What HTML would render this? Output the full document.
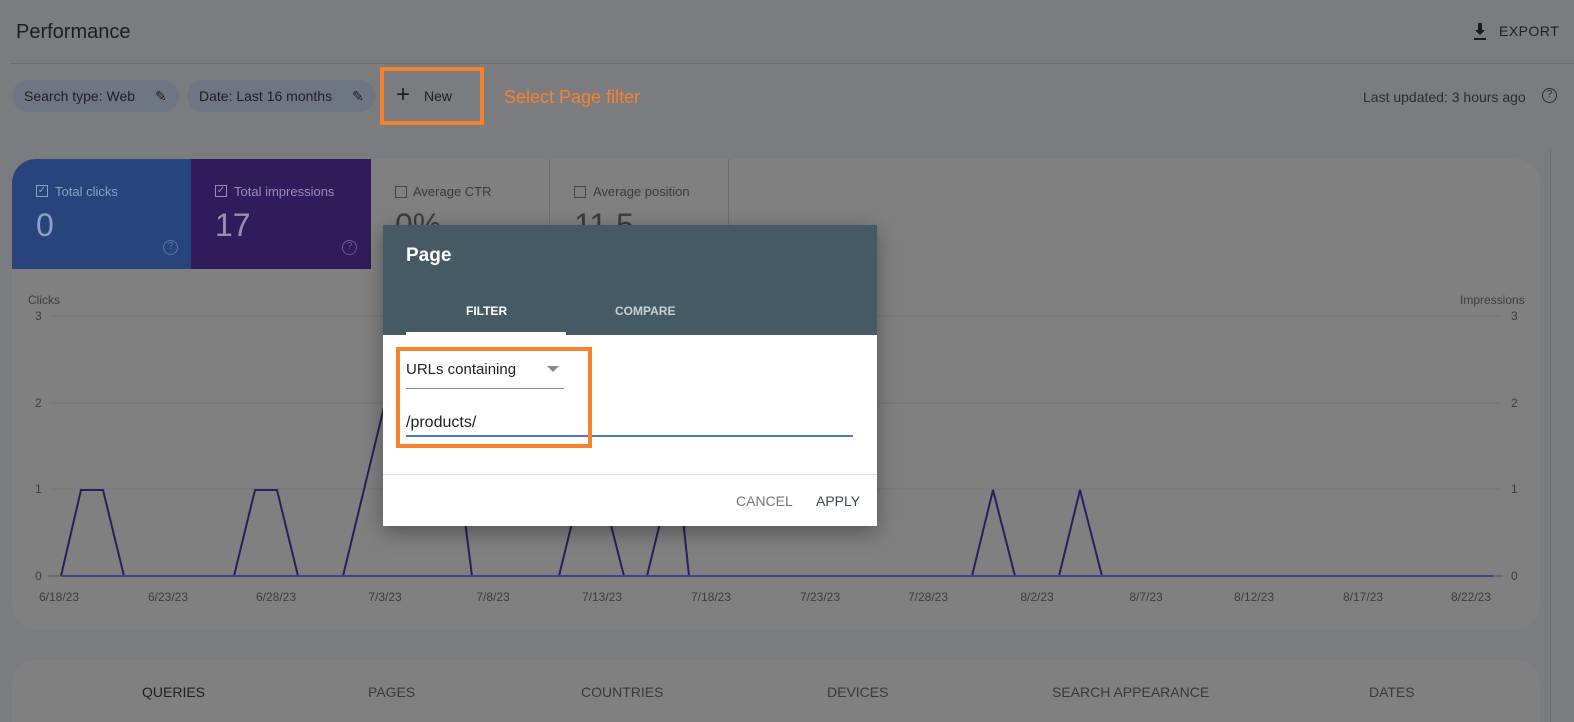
<!DOCTYPE html>
<html style="overflow:hidden;height:722px"><head><meta charset="utf-8"><style>
*{margin:0;padding:0;box-sizing:border-box}
body{width:1574px;height:722px;overflow:hidden;background:#7b7c80;font-family:"Liberation Sans",Arial,sans-serif;position:relative;color:#222}
.a{position:absolute;white-space:nowrap}
.chip{position:absolute;top:80px;height:32px;border-radius:16px;background:#6f7683;font-size:14px;color:#1e1e1e;line-height:32px;padding-left:12px}
.card{position:absolute;background:#808080;border-radius:24px}
.lbl{font-size:13px;color:#3a3a3a}
.ax{font-size:12px;color:#3c3c3c}
.tab{position:absolute;top:684px;font-size:14px;color:#383838}
</style></head><body>
<div class="a" style="left:16px;top:21px;font-size:20px;color:#1e1e1e">Performance</div>
<svg class="a" style="left:1470px;top:21px" width="20" height="20" viewBox="0 0 20 20"><path d="M8 2h4v7h3l-5 5-5-5h3z M4 17h12v2H4z" fill="#1a1a1a"/></svg>
<div class="a" style="left:1499px;top:23px;font-size:14px;color:#1e1e1e;letter-spacing:.5px">EXPORT</div>
<div class="a" style="left:10px;top:63px;width:1564px;height:1px;background:#6c6d70"></div>
<div class="chip" style="left:12px;width:167px">Search type: Web<span style="position:absolute;left:143px;top:0">✎</span></div>
<div class="chip" style="left:187px;width:189px">Date: Last 16 months<span style="position:absolute;left:165px;top:0">✎</span></div>
<div class="a" style="left:380px;top:67px;width:104px;height:58px;border:4px solid #f7822d"></div>
<div class="a" style="left:396px;top:83px;font-size:24px;color:#1e1e1e;line-height:24px">+</div>
<div class="a" style="left:424px;top:88px;font-size:14px;color:#1e1e1e">New</div>
<div class="a" style="left:504px;top:87px;font-size:18px;color:#f7822d">Select Page filter</div>
<div class="a" style="left:1363px;top:89px;font-size:14px;color:#2c2c2c">Last updated: 3 hours ago</div>
<div class="a" style="left:1542px;top:88px;width:15px;height:15px;border:1.5px solid #2c2c2c;border-radius:50%;font-size:10px;text-align:center;line-height:12px;color:#2c2c2c">?</div>
<div class="a" style="left:1550px;top:150px;width:1px;height:572px;background:#6e6f72"></div>

<div class="card" style="left:12px;top:159px;width:1528px;height:470px"></div>
<div class="a" style="left:12px;top:159px;width:179px;height:110px;background:#27447c;border-top-left-radius:24px"></div>
<div class="a" style="left:191px;top:159px;width:180px;height:110px;background:#301c5c"></div>
<div class="a" style="left:549px;top:159px;width:1px;height:110px;background:#6e6e6e"></div>
<div class="a" style="left:728px;top:159px;width:1px;height:110px;background:#6e6e6e"></div>
<div class="a" style="left:36px;top:185px;width:12px;height:12px;border:1px solid #8fa0c0;font-size:10px;line-height:10px;color:#8fa0c0;text-align:center">✓</div>
<div class="a" style="left:55px;top:184px;font-size:13px;color:#8fa0c0">Total clicks</div>
<div class="a" style="left:36px;top:207px;font-size:32px;color:#8fa0c0">0</div>
<div class="a" style="left:163px;top:240px;width:15px;height:15px;border:1.5px solid #5e73a0;border-radius:50%;font-size:10px;line-height:12px;text-align:center;color:#5e73a0">?</div>
<div class="a" style="left:215px;top:185px;width:12px;height:12px;border:1px solid #9a8fb3;font-size:10px;line-height:10px;color:#9a8fb3;text-align:center">✓</div>
<div class="a" style="left:234px;top:184px;font-size:13px;color:#9a8fb3">Total impressions</div>
<div class="a" style="left:215px;top:207px;font-size:32px;color:#9a8fb3">17</div>
<div class="a" style="left:342px;top:240px;width:15px;height:15px;border:1.5px solid #6a5b8d;border-radius:50%;font-size:10px;line-height:12px;text-align:center;color:#6a5b8d">?</div>
<div class="a" style="left:395px;top:186px;width:12px;height:12px;border:1px solid #444"></div>
<div class="a lbl" style="left:413px;top:184px">Average CTR</div>
<div class="a" style="left:395px;top:207px;font-size:32px;color:#3c3c3c">0%</div>
<div class="a" style="left:574px;top:186px;width:12px;height:12px;border:1px solid #444"></div>
<div class="a lbl" style="left:593px;top:184px">Average position</div>
<div class="a" style="left:574px;top:207px;font-size:32px;color:#3c3c3c">11.5</div>

<div class="a ax" style="left:28px;top:293px">Clicks</div>
<div class="a ax" style="left:1460px;top:293px">Impressions</div>
<svg class="a" style="left:0;top:300px" width="1574" height="320">
<g stroke="#747474" stroke-width="1"><line x1="50" y1="16" x2="1500" y2="16"/><line x1="50" y1="103" x2="1500" y2="103"/><line x1="50" y1="189" x2="1500" y2="189"/></g>
<g fill="#3c3c3c" font-size="12" font-family="Liberation Sans"><text x="35" y="20">3</text><text x="35" y="107">2</text><text x="35" y="193">1</text><text x="35" y="280">0</text>
<text x="1511" y="20">3</text><text x="1511" y="107">2</text><text x="1511" y="193">1</text><text x="1511" y="280">0</text>
<g text-anchor="middle"><text x="59" y="301">6/18/23</text><text x="168" y="301">6/23/23</text><text x="276" y="301">6/28/23</text><text x="385" y="301">7/3/23</text><text x="493" y="301">7/8/23</text><text x="602" y="301">7/13/23</text><text x="711" y="301">7/18/23</text><text x="820" y="301">7/23/23</text><text x="928" y="301">7/28/23</text><text x="1037" y="301">8/2/23</text><text x="1146" y="301">8/7/23</text><text x="1254" y="301">8/12/23</text><text x="1363" y="301">8/17/23</text><text x="1471" y="301">8/22/23</text></g></g>
<line x1="48" y1="276" x2="1503" y2="276" stroke="#555" stroke-width="1"/>
<polyline fill="none" stroke="#2c1d5e" stroke-width="2" points="61,276 81,190 103,190 124,276 234,276 255,190 277,190 298,276 343,276 385,103 450,103 472,276 559,276 580,190 602,190 624,276 647,276 668,190 680,190 689,276 972,276 993,190 1015,276 1059,276 1080,190 1102,276 1493,276"/>
<line x1="61" y1="276" x2="1493" y2="276" stroke="#2b4a86" stroke-width="2"/>
</svg>

<div class="card" style="left:12px;top:660px;width:1528px;height:62px;border-bottom-left-radius:0;border-bottom-right-radius:0"></div>
<div class="tab" style="left:142px;color:#1e1e1e">QUERIES</div>
<div class="tab" style="left:368px">PAGES</div>
<div class="tab" style="left:581px">COUNTRIES</div>
<div class="tab" style="left:827px">DEVICES</div>
<div class="tab" style="left:1052px">SEARCH APPEARANCE</div>
<div class="tab" style="left:1369px">DATES</div>

<div class="a" style="left:383px;top:225px;width:494px;height:301px;background:#fff;box-shadow:0 6px 20px rgba(0,0,0,.35)">
 <div style="position:absolute;left:0;top:0;width:494px;height:110px;background:#455a64"></div>
 <div class="a" style="left:23px;top:20px;font-size:19px;font-weight:bold;color:#fff">Page</div>
 <div class="a" style="left:83px;top:79px;font-size:12px;font-weight:bold;color:#fff">FILTER</div>
 <div class="a" style="left:232px;top:79px;font-size:12px;font-weight:bold;color:#c8d0d4">COMPARE</div>
 <div class="a" style="left:23px;top:107px;width:160px;height:3px;background:#fff"></div>
 <div class="a" style="left:23px;top:136px;font-size:15px;color:#222">URLs containing</div>
 <div class="a" style="left:164px;top:141px;width:0;height:0;border-left:6px solid transparent;border-right:6px solid transparent;border-top:6px solid #888"></div>
 <div class="a" style="left:23px;top:163px;width:158px;height:1px;background:#888"></div>
 <div class="a" style="left:23px;top:189px;font-size:16px;color:#222">/products/</div>
 <div class="a" style="left:23px;top:210px;width:447px;height:2px;background:#4a7bd0"></div>
 <div class="a" style="left:0;top:249px;width:494px;height:1px;background:#ddd"></div>
 <div class="a" style="left:353px;top:268px;font-size:14px;color:#777">CANCEL</div>
 <div class="a" style="left:433px;top:268px;font-size:14px;color:#3a4a54">APPLY</div>
 <div class="a" style="left:13px;top:122px;width:196px;height:101px;border:4px solid #f7822d"></div>
</div>
</body></html>
